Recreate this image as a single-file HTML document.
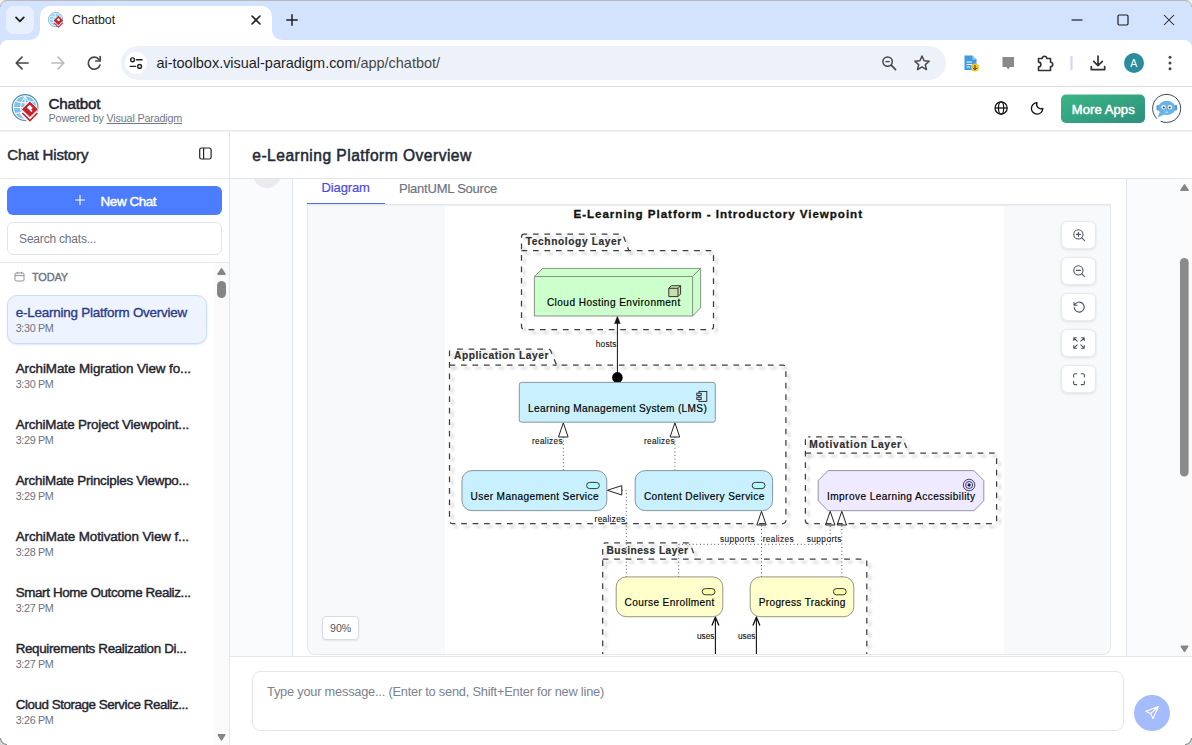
<!DOCTYPE html>
<html>
<head>
<meta charset="utf-8">
<title>Chatbot</title>
<style>
*{box-sizing:border-box;margin:0;padding:0}
html,body{width:1192px;height:745px;overflow:hidden;background:#fff}
body{font-family:"Liberation Sans",sans-serif;position:relative;color:#1f2937}
.abs{position:absolute}
.t{position:absolute;white-space:nowrap;line-height:1}
/* browser chrome */
#tabbar{left:0;top:0;width:1192px;height:50px;background:#d3e3fd;border-top:1px solid #b9b9b9}
#tab{left:40px;top:6px;width:232px;height:34px;background:#fff;border-radius:10px 10px 0 0}
#tabdd{left:6px;top:6px;width:27.6px;height:28px;background:#e9f0fd;border-radius:8px}
#toolbar{left:0;top:40px;width:1192px;height:46px;background:#fff;border-radius:8px 8px 0 0}
#urlpill{left:121px;top:46px;width:825px;height:34px;border-radius:17px;background:#edf2fa}
#tbline{left:0;top:86px;width:1192px;height:1px;background:#dadce0}
/* app */
#apphead{left:0;top:87px;width:1192px;height:43px;background:#fff}
#appline{left:0;top:130px;width:1192px;height:2px;background:linear-gradient(#e3e4e8,#f3f4f6)}
#sidebar{left:0;top:132px;width:229px;height:613px;background:#fff}
#sideline{left:229px;top:132px;width:1px;height:613px;background:#e5e7eb}
#main{left:230px;top:132px;width:962px;height:613px;background:#fafbfd}
</style>
</head>
<body>
<!-- ===== Browser chrome ===== -->
<div id="tabbar" class="abs"></div>
<div id="tabdd" class="abs"></div>
<div id="tab" class="abs"></div>
<div id="toolbar" class="abs"></div>
<div id="urlpill" class="abs"></div>
<div id="tbline" class="abs"></div>
<!-- ===== App ===== -->
<div id="apphead" class="abs"></div>
<div id="appline" class="abs"></div>
<div id="sidebar" class="abs"></div>
<div id="sideline" class="abs"></div>
<div id="main" class="abs"></div>
<!-- tab strip -->
<svg class="abs" style="left:0;top:0" width="1192" height="87" viewBox="0 0 1192 87" fill="none">
  <!-- tab curves at bottom corners -->
  <path d="M30 40 H40 V30 A10 10 0 0 1 30 40 Z" fill="#fff"/>
  <path d="M282 40 H272 V30 A10 10 0 0 0 282 40 Z" fill="#fff"/>
  <!-- dropdown chevron -->
  <path d="M16 17.4 L19.9 21.4 L23.8 17.4" stroke="#1f1f1f" stroke-width="1.8" fill="none" stroke-linecap="round" stroke-linejoin="round"/>
  <!-- favicon -->
  <circle cx="55.6" cy="19.6" r="7.1" fill="#fff" stroke="#6a9bb5" stroke-width=".8"/>
  <circle cx="55.6" cy="19.6" r="6" fill="#8fd0f3"/>
  <path d="M49.6 19.6 H61.6 M55.6 13.6 V25.6 M50.6 16.4 Q55.6 18 60.6 16.4 M50.6 22.8 Q55.6 21.2 60.6 22.8 M55.6 13.6 Q50.4 19.6 55.6 25.6" stroke="#fff" stroke-width=".6" fill="none"/>
  <path d="M54 23 L58.4 27.2 L62.8 23" stroke="#d6434b" stroke-width="1.1" fill="none"/>
  <path d="M58.4 15.8 L63 20.4 L58.4 25 L53.8 20.4 Z" fill="#cd1f2a"/>
  <path d="M58.3 18 L60.1 19.8 L58.9 21.6 L56.6 19.7 Z" fill="#fff"/>
  <!-- tab close -->
  <path d="M252 16 L260 24 M260 16 L252 24" stroke="#1f1f1f" stroke-width="1.6" stroke-linecap="round"/>
  <!-- new tab plus -->
  <path d="M286.8 20 H297.2 M292 14.8 V25.2" stroke="#1f1f1f" stroke-width="1.5" stroke-linecap="round"/>
  <!-- window controls -->
  <path d="M1071.5 20 H1082.5" stroke="#1f1f1f" stroke-width="1.2"/>
  <rect x="1118" y="15" width="10" height="10" rx="1.2" stroke="#1f1f1f" stroke-width="1.2"/>
  <path d="M1164 15 L1174 25 M1174 15 L1164 25" stroke="#1f1f1f" stroke-width="1.05"/>
  <!-- back -->
  <path d="M28 63 H16.5 M22 57.2 L16.2 63 L22 68.8" stroke="#474747" stroke-width="1.7" fill="none" stroke-linecap="round" stroke-linejoin="round"/>
  <!-- forward (disabled) -->
  <path d="M52 63 H63.5 M58 57.2 L63.8 63 L58 68.8" stroke="#bdbdbd" stroke-width="1.7" fill="none" stroke-linecap="round" stroke-linejoin="round"/>
  <!-- reload -->
  <path d="M99 59.5 A6 6 0 1 0 100 65" stroke="#474747" stroke-width="1.7" fill="none" stroke-linecap="round"/>
  <path d="M100.2 56.5 V61 H95.7" stroke="#474747" stroke-width="1.7" fill="none" stroke-linejoin="round" stroke-linecap="round"/>
  <!-- site info circle -->
  <circle cx="136" cy="63" r="11" fill="#fff"/>
  <circle cx="132.6" cy="59.8" r="1.9" stroke="#1f1f1f" stroke-width="1.4"/>
  <path d="M136.5 59.8 H142" stroke="#1f1f1f" stroke-width="1.4" stroke-linecap="round"/>
  <circle cx="139.6" cy="66.4" r="1.9" stroke="#1f1f1f" stroke-width="1.4"/>
  <path d="M130.2 66.4 H135.6" stroke="#1f1f1f" stroke-width="1.4" stroke-linecap="round"/>
  <!-- zoom-out magnifier -->
  <circle cx="887.6" cy="61.6" r="4.7" stroke="#474747" stroke-width="1.5"/>
  <path d="M891.2 65.2 L895.6 69.6" stroke="#474747" stroke-width="1.7" stroke-linecap="round"/>
  <path d="M885.4 61.6 H889.8" stroke="#474747" stroke-width="1.3"/>
  <!-- star -->
  <path d="M922 56 L924.1 60.7 L929.2 61.2 L925.3 64.6 L926.5 69.6 L922 66.9 L917.5 69.6 L918.7 64.6 L914.8 61.2 L919.9 60.7 Z" stroke="#474747" stroke-width="1.5" stroke-linejoin="round"/>
  <!-- ext 1: blue doc w/ yellow badge -->
  <path d="M964.5 55.5 H972.5 L976.5 59.5 V70 H964.5 Z" fill="#3f9ae0"/>
  <path d="M972.5 55.5 V59.5 H976.5 Z" fill="#9fd0f5"/>
  <path d="M966.5 62 H972 M966.5 64.5 H972 M966.5 67 H970" stroke="#fff" stroke-width="1"/>
  <circle cx="975" cy="67.5" r="4" fill="#f7c325"/>
  <path d="M975 65 V69.5 M973 67.8 L975 69.8 L977 67.8" stroke="#333" stroke-width="1" fill="none"/>
  <!-- ext 2: grey speech bubble -->
  <path d="M1002.5 57 H1014 V67 H1010 L1008.2 69.5 L1006.4 67 H1002.5 Z" fill="#8a8a8a"/>
  <!-- ext 3: puzzle -->
  <path d="M1038.5 58.5 H1042.3 A2.2 2.2 0 0 1 1046.7 58.5 H1050.5 V62.3 A2.2 2.2 0 0 1 1050.5 66.7 V70.5 H1038.5 V66.9 A2.3 2.3 0 0 0 1038.5 62.1 Z" stroke="#333" stroke-width="1.6" stroke-linejoin="round"/>
  <!-- separator -->
  <rect x="1070.5" y="56" width="2" height="14" rx="1" fill="#c7d7f5"/>
  <!-- download -->
  <path d="M1098 56 V65.2 M1093.7 61.3 L1098 65.6 L1102.3 61.3" stroke="#333" stroke-width="1.7" fill="none" stroke-linejoin="round" stroke-linecap="round"/>
  <path d="M1091.3 66.5 V69.6 H1104.7 V66.5" stroke="#333" stroke-width="1.7" fill="none" stroke-linejoin="round" stroke-linecap="round"/>
  <!-- avatar -->
  <circle cx="1134" cy="63" r="10" fill="#2b8c9e"/>
  <!-- menu dots -->
  <circle cx="1170" cy="57.2" r="1.5" fill="#474747"/><circle cx="1170" cy="63" r="1.5" fill="#474747"/><circle cx="1170" cy="68.8" r="1.5" fill="#474747"/>
</svg>
<div class="t" style="left:72px;top:14.4px;font-size:12.4px;color:#1f1f1f;letter-spacing:-.05px">Chatbot</div>
<div class="t" style="left:156.5px;top:55.5px;font-size:14.5px;color:#1f1f1f;letter-spacing:-.024px">ai-toolbox.visual-paradigm.com<span style="color:#474747">/app/chatbot/</span></div>
<div class="t" style="left:1130.3px;top:57.8px;font-size:10.5px;color:#fff">A</div>

<!--CHROME-ICONS-END-->
<svg class="abs" style="left:0;top:87px" width="1192" height="44" viewBox="0 87 1192 44" fill="none">
  <!-- logo -->
  <circle cx="25.1" cy="107.5" r="12.9" fill="#fff" stroke="#4f87a6" stroke-width="1.1"/>
  <circle cx="25.1" cy="107.5" r="11.2" fill="#7cc4ee"/>
  <path d="M13.9 107.5 H36.3 M25.1 96.3 V118.7 M15.6 101.6 Q25.1 104.6 34.6 101.6 M15.6 113.4 Q25.1 110.4 34.6 113.4 M25.1 96.3 Q15.5 107.5 25.1 118.7 M25.1 96.3 Q34.7 107.5 25.1 118.7" stroke="#fff" stroke-width="1" fill="none"/>
  <path d="M21.2 112.6 L29.9 121.3 L38.6 112.6" stroke="#fff" stroke-width="4.2" fill="none"/>
  <path d="M22.4 113 L29.9 120.5 L37.4 113" stroke="#c8222c" stroke-width="1.7" fill="none"/>
  <path d="M29.9 100.6 L38.8 109.3 L29.9 118 L21 109.3 Z" fill="#fff"/>
  <path d="M29.9 101.5 L37.9 109.3 L29.9 117.1 L21.9 109.3 Z" fill="#c8222c"/>
  <path d="M29.7 104.8 L32.8 107.9 L31.2 109.5 L32.6 110.9 L31.4 112.1 L26.9 107.6 Z" fill="#fff"/>
  <!-- globe icon -->
  <circle cx="1001.1" cy="108" r="6.1" stroke="#111" stroke-width="1.25"/>
  <ellipse cx="1001.1" cy="108" rx="2.6" ry="6.1" stroke="#111" stroke-width="1.15"/>
  <path d="M995 108 H1007.2" stroke="#111" stroke-width="1.3"/>
  <!-- moon -->
  <path d="M1037 102.7 A5.7 5.7 0 1 0 1042.8 108.3 A4.3 4.3 0 0 1 1037 102.7 Z" stroke="#111" stroke-width="1.3" stroke-linejoin="round"/>
  <!-- more apps -->
  <defs><linearGradient id="ga" x1="0" y1="0" x2="1" y2="1"><stop offset="0" stop-color="#3bb685"/><stop offset="1" stop-color="#2c907d"/></linearGradient></defs>
  <rect x="1061" y="94.5" width="84" height="28.5" rx="5" fill="url(#ga)"/>
  <!-- bot avatar -->
  <path d="M1156.6 118.4 A14.1 14.1 0 1 1 1161 121.4" stroke="#3b4663" stroke-width="1" fill="none" stroke-linecap="round"/>
  <path d="M1159.6 112.2 L1157.6 117.6 L1164.6 114.6 Z" fill="#6bb3e7"/>
  <rect x="1156.6" y="105" width="2.6" height="5.4" rx="1.2" fill="#4f94d4"/><rect x="1174.4" y="105" width="2.6" height="5.4" rx="1.2" fill="#4f94d4"/>
  <ellipse cx="1166.8" cy="107.9" rx="8.7" ry="7.1" fill="#6bb3e7"/>
  <circle cx="1163.6" cy="107.3" r="2.2" fill="#eef6fc"/><circle cx="1169.9" cy="107.3" r="2.2" fill="#eef6fc"/>
  <circle cx="1163.8" cy="107.4" r="1" fill="#39445e"/><circle cx="1169.7" cy="107.4" r="1" fill="#39445e"/>
  <rect x="1165.5" y="111.6" width="2.6" height="1.1" rx=".5" fill="#cfe7f8"/>
</svg>
<div class="t" style="left:48.6px;top:95.6px;font-size:15.2px;color:#1e2235;-webkit-text-stroke:.5px #1e2235;letter-spacing:-.23px">Chatbot</div>
<div class="t" style="left:48.6px;top:112.6px;font-size:10.8px;color:#737987;letter-spacing:-.19px">Powered by <span style="text-decoration:underline">Visual Paradigm</span></div>
<div class="t" style="left:1071.8px;top:103px;font-size:13px;color:#fff;-webkit-text-stroke:.5px #fff;letter-spacing:.09px">More Apps</div>

<!--APP-HEADER-END-->
<div class="abs" style="left:0;top:178px;width:229px;height:1px;background:#e5e7eb"></div>
<div class="t" style="left:7.3px;top:146.8px;font-size:15px;font-weight:normal;-webkit-text-stroke:.45px #1f2937;color:#1f2937;letter-spacing:-.128px">Chat History</div>
<svg class="abs" style="left:198.4px;top:146.4px" width="15" height="15" viewBox="0 0 15 15" fill="none"><rect x="1.7" y="2" width="11.4" height="11" rx="1.8" stroke="#222" stroke-width="1.2"/><path d="M5.6 2 V13" stroke="#222" stroke-width="1.2"/></svg>
<div class="abs" style="left:7px;top:186px;width:215px;height:29px;border-radius:6px;background:#4c7cff"></div>
<svg class="abs" style="left:74px;top:194px" width="12" height="12" viewBox="0 0 12 12"><path d="M6 1 V11 M1 6 H11" stroke="#fff" stroke-width="1.1"/></svg>
<div class="t" style="left:100.6px;top:195.2px;font-size:13.4px;font-weight:normal;-webkit-text-stroke:.45px #fff;color:#fff;letter-spacing:-.41px">New Chat</div>
<div class="abs" style="left:7px;top:222px;width:215px;height:33px;border-radius:6px;border:1px solid #e2e4e9;background:#fff"></div>
<div class="t" style="left:19.1px;top:233.2px;font-size:12px;color:#6b7280;letter-spacing:-.2px">Search chats...</div>
<div class="abs" style="left:0;top:262px;width:229px;height:1px;background:#e5e7eb"></div>
<!-- list scrollbar -->
<div class="abs" style="left:214px;top:263px;width:15px;height:482px;background:#fafafa"></div>
<svg class="abs" style="left:214px;top:263px" width="15" height="482" viewBox="0 0 15 482"><path d="M4 11.2 L7.5 5.9 L11 11.2 Z" fill="#858585" stroke="#858585" stroke-width="1.6" stroke-linejoin="round"/><path d="M4.4 471.8 L7.5 476.8 L10.6 471.8 Z" fill="#858585" stroke="#858585" stroke-width="1.6" stroke-linejoin="round"/><rect x="3" y="18" width="9" height="17" rx="4.5" fill="#858585"/></svg>
<!-- today -->
<svg class="abs" style="left:14px;top:271px" width="11" height="11" viewBox="0 0 11 11" fill="none"><rect x="1" y="2" width="9" height="8" rx="1.2" stroke="#8b909a" stroke-width="1"/><path d="M1 4.6 H10 M3.4 .8 V3 M7.6 .8 V3" stroke="#8b909a" stroke-width="1"/></svg>
<div class="t" style="left:32px;top:271.8px;font-size:11px;font-weight:normal;-webkit-text-stroke:.35px #6b7280;color:#6b7280;letter-spacing:-.178px">TODAY</div>
<div class="abs" style="left:7px;top:295.2px;width:200px;height:48.8px;border-radius:10px;background:#eef4ff;border:1px solid #c9dcfb;box-shadow:0 1px 2px rgba(120,150,220,.25)"></div>
<style>.ct{position:absolute;left:15.7px;font-size:13.4px;font-weight:normal;color:#1f2430;white-space:nowrap;line-height:1;-webkit-text-stroke:.42px #1f2430}.cm{position:absolute;left:15.7px;font-size:10.8px;color:#6b7280;white-space:nowrap;line-height:1;letter-spacing:-.34px}</style>
<div class="ct" style="top:305.5px;color:#2c3a8a;letter-spacing:-.205px;-webkit-text-stroke:.35px #2c3a8a">e-Learning Platform Overview</div><div class="cm" style="top:323.2px">3:30 PM</div>
<div class="ct" style="top:361.5px;letter-spacing:-0.077px">ArchiMate Migration View fo...</div><div class="cm" style="top:379.2px">3:30 PM</div>
<div class="ct" style="top:417.5px;letter-spacing:-0.169px">ArchiMate Project Viewpoint...</div><div class="cm" style="top:435.2px">3:29 PM</div>
<div class="ct" style="top:473.5px;letter-spacing:-0.244px">ArchiMate Principles Viewpo...</div><div class="cm" style="top:491.2px">3:29 PM</div>
<div class="ct" style="top:529.5px;letter-spacing:-0.095px">ArchiMate Motivation View f...</div><div class="cm" style="top:547.2px">3:28 PM</div>
<div class="ct" style="top:585.5px;letter-spacing:-0.371px">Smart Home Outcome Realiz...</div><div class="cm" style="top:603.2px">3:27 PM</div>
<div class="ct" style="top:641.5px;letter-spacing:-0.342px">Requirements Realization Di...</div><div class="cm" style="top:659.2px">3:27 PM</div>
<div class="ct" style="top:697.5px;letter-spacing:-0.441px">Cloud Storage Service Realiz...</div><div class="cm" style="top:715.2px">3:26 PM</div>

<!--SIDEBAR-END-->
<!-- main header -->
<div class="abs" style="left:230px;top:132px;width:962px;height:46px;background:#fff"></div>
<div class="abs" style="left:230px;top:178px;width:962px;height:1px;background:#e3e5ea"></div>
<div class="t" id="mtitle" style="left:252.3px;top:147.6px;font-size:15.6px;color:#1f2937;-webkit-text-stroke:.5px #1f2937;letter-spacing:.47px">e-Learning Platform Overview</div>
<!-- avatar stub -->
<div class="abs" style="left:230px;top:179px;width:63px;height:12px;overflow:hidden"><div class="abs" style="left:22.5px;top:-19px;width:28px;height:28px;border-radius:50%;background:#ebebef"></div></div>
<!-- bubble -->
<div class="abs" style="left:292px;top:179px;width:835px;height:478px;background:#fff;border-left:1px solid #e2e4e9;border-right:1px solid #e2e4e9"></div>
<!-- tabs -->
<div class="abs" style="left:307px;top:203.5px;width:804px;height:1.5px;background:#e5e7eb"></div>
<div class="abs" style="left:307px;top:202.6px;width:78px;height:1.8px;background:#4a6cf7"></div>
<div class="t" id="tab1" style="left:321.5px;top:181.2px;font-size:13px;color:#4b4be6;-webkit-text-stroke:.2px #4b4be6;letter-spacing:-.12px">Diagram</div>
<div class="t" id="tab2" style="left:399px;top:182px;font-size:13px;color:#6b7280;-webkit-text-stroke:.15px #6b7280;letter-spacing:-.23px">PlantUML Source</div>
<!-- diagram container -->
<div class="abs" style="left:307px;top:205px;width:804px;height:450px;background:#f8f9fb;border:1px solid #e5e7eb;border-top-color:#eceef2;border-radius:0 0 8px 8px;overflow:hidden">
  <div class="abs" style="left:137px;top:0;width:559px;height:450px;background:#fff"></div>
</div>
<!-- zoom controls -->
<style>.zb{position:absolute;left:1061px;width:35px;height:28px;border-radius:6px;background:#fff;border:1px solid #e8eaee;box-shadow:0 1px 3px rgba(0,0,0,.1)}</style>
<div class="zb" style="top:220.9px"></div><div class="zb" style="top:256.9px"></div><div class="zb" style="top:292.9px"></div><div class="zb" style="top:328.9px"></div><div class="zb" style="top:364.9px"></div>
<svg class="abs" style="left:1061.5px;top:221.4px" width="34" height="174" viewBox="0 0 34 174" fill="none" stroke="#4b5563" stroke-width="1.1" stroke-linecap="round" stroke-linejoin="round">
  <circle cx="16.4" cy="13.4" r="4.6"/><path d="M19.8 16.8 L22.6 19.6 M14.4 13.4 H18.4 M16.4 11.4 V15.4"/>
  <circle cx="16.4" cy="49.4" r="4.6"/><path d="M19.8 52.8 L22.6 55.6 M14.4 49.4 H18.4"/>
  <path d="M12.2 86.3 A5 5 0 1 0 13.6 82.6 L12 84.2 M12 81.2 V84.3 H15.1"/>
  <path d="M18.8 120.2 L22.2 116.8 M19.6 116.8 H22.2 V119.4 M15.2 120.2 L11.8 116.8 M14.4 116.8 H11.8 V119.4 M18.8 123.8 L22.2 127.2 M19.6 127.2 H22.2 V124.6 M15.2 123.8 L11.8 127.2 M14.4 127.2 H11.8 V124.6"/>
  <path d="M11.6 156 V154.2 A1.4 1.4 0 0 1 13 152.8 H14.8 M19.2 152.8 H21 A1.4 1.4 0 0 1 22.4 154.2 V156 M22.4 160.4 V162.2 A1.4 1.4 0 0 1 21 163.6 H19.2 M14.8 163.6 H13 A1.4 1.4 0 0 1 11.6 162.2 V160.4"/>
</svg>
<!-- 90% badge -->
<div class="abs" style="left:322px;top:616px;width:37px;height:24px;border-radius:4px;background:#fff;border:1px solid #d9dce2;box-shadow:0 1px 2px rgba(0,0,0,.09)"></div>
<div class="t" style="left:330px;top:622.8px;font-size:10.6px;color:#4b5563;letter-spacing:0">90%</div>
<!-- main scrollbar -->
<div class="abs" style="left:1177px;top:179px;width:15px;height:478px;background:#fafafa"></div>
<svg class="abs" style="left:1177px;top:179px" width="15" height="478" viewBox="0 0 15 478"><path d="M4 11.2 L7.5 5.9 L11 11.2 Z" fill="#858585" stroke="#858585" stroke-width="1.6" stroke-linejoin="round"/><path d="M4.4 467.3 L7.5 472.3 L10.6 467.3 Z" fill="#858585" stroke="#858585" stroke-width="1.6" stroke-linejoin="round"/><rect x="3" y="79" width="8.6" height="218.5" rx="4.3" fill="#8a8a8a"/></svg>
<!-- input area -->
<div class="abs" style="left:230px;top:656px;width:962px;height:89px;background:#fff;border-top:1px solid #e3e5ea"></div>
<div class="abs" style="left:252px;top:671px;width:872px;height:60px;border:1px solid #e3e5ea;border-radius:9px;background:#fff"></div>
<div class="t" id="ph" style="left:267px;top:686px;font-size:12.8px;color:#7b8291;letter-spacing:-.215px">Type your message... (Enter to send, Shift+Enter for new line)</div>
<div class="abs" style="left:1134px;top:694.7px;width:36px;height:36px;border-radius:50%;background:#a4bcfc"></div>
<svg class="abs" style="left:1143.3px;top:703.8px" width="18" height="18" viewBox="0 0 18 18" fill="none" stroke="#fff" stroke-width="1.1" stroke-linejoin="round" stroke-linecap="round"><path d="M15.5 2.5 L2.8 7.2 L7.6 9.6 L10 14.6 Z M15.5 2.5 L7.6 9.6"/></svg>
<!-- window top corners -->
<svg class="abs" style="left:0;top:0" width="8" height="8" viewBox="0 0 8 8"><path d="M0 0 H7 A7 7 0 0 0 0 7 Z" fill="#efeeec"/><path d="M7 .5 A6.5 6.5 0 0 0 .5 7" stroke="#b9b9b9" fill="none"/></svg>
<svg class="abs" style="left:1184px;top:0" width="8" height="8" viewBox="0 0 8 8"><path d="M8 0 H1 A7 7 0 0 1 8 7 Z" fill="#efeeec"/><path d="M1 .5 A6.5 6.5 0 0 1 7.5 7" stroke="#b9b9b9" fill="none"/></svg>
<!-- window rounded bottom corners -->
<svg class="abs" style="left:0;top:737px" width="8" height="8" viewBox="0 0 8 8"><path d="M0 8 H7 A7 7 0 0 1 0 1 Z" fill="#d9d9d9"/><path d="M.5 1 A6.5 6.5 0 0 0 7 7.5" stroke="#8f8f8f" stroke-width="1.2" fill="none"/></svg>
<svg class="abs" style="left:1184px;top:737px" width="8" height="8" viewBox="0 0 8 8"><path d="M8 8 H1 A7 7 0 0 0 8 1 Z" fill="#d9d9d9"/><path d="M7.5 1 A6.5 6.5 0 0 1 1 7.5" stroke="#8f8f8f" stroke-width="1.2" fill="none"/></svg>
<!--MAIN-END-->
<svg class="abs" style="left:445px;top:206px" width="559" height="448" viewBox="445 206 559 448" font-family="'Liberation Sans',sans-serif">
  <defs>
    <filter id="sh" x="-5%" y="-5%" width="115%" height="115%"><feGaussianBlur in="SourceAlpha" stdDeviation="1.5"/><feOffset dx="3.3" dy="3.3" result="b"/><feComponentTransfer><feFuncA type="linear" slope=".3"/></feComponentTransfer><feMerge><feMergeNode/><feMergeNode in="SourceGraphic"/></feMerge></filter>
  </defs>
  <!-- title -->
  <text x="573.5" y="217.6" font-size="11.6" font-weight="bold" fill="#111" stroke="#111" stroke-width=".3" textLength="288.5" lengthAdjust="spacing">E-Learning Platform - Introductory Viewpoint</text>

  <!-- ===== frames ===== -->
  <g fill="none" stroke="#3d3d3d" stroke-width="1.25" stroke-dasharray="5.73 5.73" filter="url(#sh)">
    <!-- frames: tab+body outline, then under-tab line -->
    <path d="M524.3 234 H620.6 Q622.6 234 623.4 236 L628.8 250.5 H710.7 A2.8 2.8 0 0 1 713.5 253.3 V326.7 A2.8 2.8 0 0 1 710.7 329.5 H524.3 A2.8 2.8 0 0 1 521.5 326.7 V236.8 A2.8 2.8 0 0 1 524.3 234" stroke-dashoffset="2.85"/>
    <path d="M521.5 250.5 H628.8"/>
    <path d="M452.3 349 H548 Q550 349 550.8 351 L556.6 365.2 H783.1 A2.8 2.8 0 0 1 785.9 368.0 V520.7 A2.8 2.8 0 0 1 783.1 523.5 H452.3 A2.8 2.8 0 0 1 449.5 520.7 V351.8 A2.8 2.8 0 0 1 452.3 349" stroke-dashoffset="6.65"/>
    <path d="M449.5 365.2 H556.6"/>
    <path d="M808.2 436.8 H900.2 Q902.2 436.8 903.0 438.8 L908.4 453 H993.8 A2.8 2.8 0 0 1 996.6 455.8 V520.7 A2.8 2.8 0 0 1 993.8 523.5 H808.2 A2.8 2.8 0 0 1 805.4 520.7 V439.6 A2.8 2.8 0 0 1 808.2 436.8" stroke-dashoffset="3.54"/>
    <path d="M805.4 453 H908.4"/>
    <path d="M605.5 542.8 H687.8 Q689.8 542.8 690.6 544.8 L695.6 559 H864.0 A2.8 2.8 0 0 1 866.8 561.8 V676.2 A2.8 2.8 0 0 1 864.0 679 H605.5 A2.8 2.8 0 0 1 602.7 676.2 V545.6 A2.8 2.8 0 0 1 605.5 542.8" stroke-dashoffset="2.77"/>
    <path d="M602.7 559 H695.6"/>
  </g>
  <g font-size="10.2" font-weight="bold" fill="#2e2e2e" stroke="#2e2e2e" stroke-width=".2">
    <text x="525.7" y="245" textLength="95.6" lengthAdjust="spacing">Technology Layer</text>
    <text x="454" y="359.2" textLength="94.4" lengthAdjust="spacing">Application Layer</text>
    <text x="809.2" y="448.3" textLength="91.8" lengthAdjust="spacing">Motivation Layer</text>
    <text x="606.5" y="553.8" textLength="81.5" lengthAdjust="spacing">Business Layer</text>
  </g>

  <!-- ===== connectors ===== -->
  <g stroke="#111" fill="none">
    <!-- hosts -->
    <path d="M617.4 377 V323" stroke-width="1"/>
    <path d="M617.4 316.2 L620.2 323.6 H614.6 Z" fill="#111" stroke-width=".5"/>
    <circle cx="617.4" cy="377.4" r="5.3" fill="#000" stroke="none"/>
    <!-- uses arrows -->
    <path d="M715.4 654 V618" stroke-width="1.1"/>
    <path d="M711.9 625.6 L715.4 617.2 L718.9 625.6" stroke-width="1.3"/>
    <path d="M756.4 654 V618" stroke-width="1.1"/>
    <path d="M752.9 625.6 L756.4 617.2 L759.9 625.6" stroke-width="1.3"/>
  </g>
  <!-- dotted lines -->
  <g stroke="#444" stroke-width="1" stroke-dasharray="0.9 2.7" fill="none">
    <path d="M563.3 437 V470.5"/>
    <path d="M674.9 437 V470.5"/>
    <path d="M622 490.3 H626.3 V577"/>
    <path d="M761.5 525.5 V577"/>
    <path d="M678.7 577 V544.3 H830.2 V525.5"/>
    <path d="M841.8 525.5 V577"/>
  </g>
  <!-- hollow triangles -->
  <g stroke="#222" stroke-width="1" fill="none" stroke-linejoin="miter">
    <path d="M563.3 422.8 L558.5 437 H568.1 Z"/>
    <path d="M674.9 422.8 L670.1 437 H679.7 Z"/>
    <path d="M607.3 490.3 L621.8 485.6 V495 Z"/>
    <path d="M761.5 511.3 L756.8 525 H766.2 Z"/>
    <path d="M830.2 511.3 L825.5 525 H834.9 Z"/>
    <path d="M841.8 511.3 L837.1 525 H846.5 Z"/>
  </g>
  <!-- edge labels -->
  <g font-size="8.3" fill="#111" stroke="#111" stroke-width=".1">
    <text x="595.7" y="346.7" textLength="20.8" lengthAdjust="spacing">hosts</text>
    <text x="532" y="444" textLength="30.6" lengthAdjust="spacing">realizes</text>
    <text x="644" y="444" textLength="30.6" lengthAdjust="spacing">realizes</text>
    <text x="594.6" y="522" textLength="30.6" lengthAdjust="spacing">realizes</text>
    <text x="719.9" y="541.8" textLength="34.8" lengthAdjust="spacing">supports</text>
    <text x="762.7" y="541.8" textLength="30.9" lengthAdjust="spacing">realizes</text>
    <text x="806.7" y="541.8" textLength="34.8" lengthAdjust="spacing">supports</text>
    <text x="697" y="639" textLength="17.5" lengthAdjust="spacing">uses</text>
    <text x="738" y="639" textLength="17.5" lengthAdjust="spacing">uses</text>
  </g>

  <!-- ===== elements ===== -->
  <!-- Cloud hosting node -->
  <g stroke="#7c877c" stroke-width=".9" stroke-linejoin="round">
    <path d="M534.4 276.5 L542.7 268.4 H700.6 V307.8 L692.6 316 H534.4 Z" fill="#ccffcc"/>
    <path d="M534.4 276.5 H692.6 V316 M692.6 276.5 L700.6 268.4" fill="none"/>
  </g>
  <g stroke="#222" stroke-width=".9" stroke-linejoin="round">
    <path d="M668.8 288.3 L671.4 285.7 H680.6 V294 L678 296.6 H668.8 Z" fill="#c6deb0"/>
    <path d="M668.8 288.3 H678 V296.6 M678 288.3 L680.6 285.7" fill="none"/>
  </g>
  <!-- LMS -->
  <rect x="519.3" y="382.4" width="196" height="39.8" rx="2.3" fill="#c8f0ff" stroke="#7d8a92" stroke-width=".9"/>
  <g stroke="#222" stroke-width=".9" fill="#c8f0ff">
    <rect x="699" y="391.4" width="7.8" height="10"/>
    <rect x="696.8" y="393.2" width="4.4" height="2.2"/>
    <rect x="696.8" y="397.2" width="4.4" height="2.2"/>
  </g>
  <!-- services -->
  <rect x="462" y="470.6" width="144.8" height="40" rx="10" fill="#c8f0ff" stroke="#7d8a92" stroke-width=".9"/>
  <rect x="586.6" y="482.4" width="12.8" height="6.2" rx="3.1" fill="#b6fbff" stroke="#222" stroke-width=".9"/>
  <rect x="635.2" y="470.6" width="137.4" height="40" rx="10" fill="#c8f0ff" stroke="#7d8a92" stroke-width=".9"/>
  <rect x="752.2" y="482.4" width="12.8" height="6.2" rx="3.1" fill="#b6fbff" stroke="#222" stroke-width=".9"/>
  <!-- goal -->
  <path d="M828.1 470.6 H973.9 L983.8 480.5 V500.8 L973.9 510.7 H828.1 L818.2 500.8 V480.5 Z" fill="#efeaff" stroke="#8a8799" stroke-width=".9"/>
  <g stroke="#1f1f4d" stroke-width=".8" fill="none"><circle cx="969.1" cy="485" r="5.8" fill="#e3dcfb"/><circle cx="969.1" cy="485" r="3.5"/><circle cx="969.1" cy="485" r="1.2" fill="#1f1f4d"/></g>
  <!-- business -->
  <rect x="616.2" y="576.9" width="106.6" height="39.8" rx="10" fill="#ffffcc" stroke="#8a8a78" stroke-width=".9"/>
  <rect x="702.2" y="588.6" width="12.8" height="6.2" rx="3.1" fill="#fdfdaa" stroke="#222" stroke-width=".9"/>
  <rect x="750.2" y="576.9" width="103.6" height="39.8" rx="10" fill="#ffffcc" stroke="#8a8a78" stroke-width=".9"/>
  <rect x="833.4" y="588.6" width="12.8" height="6.2" rx="3.1" fill="#fdfdaa" stroke="#222" stroke-width=".9"/>
  <!-- element labels -->
  <g font-size="10.1" fill="#000" stroke="#000" stroke-width=".18">
    <text x="546.9" y="305.9" textLength="133.3" lengthAdjust="spacing">Cloud Hosting Environment</text>
    <text x="528" y="412.4" textLength="178.8" lengthAdjust="spacing">Learning Management System (LMS)</text>
    <text x="470.6" y="500" textLength="127.9" lengthAdjust="spacing">User Management Service</text>
    <text x="643.9" y="500" textLength="120.4" lengthAdjust="spacing">Content Delivery Service</text>
    <text x="827" y="500" textLength="148.1" lengthAdjust="spacing">Improve Learning Accessibility</text>
    <text x="624.5" y="605.9" textLength="89.9" lengthAdjust="spacing">Course Enrollment</text>
    <text x="758.7" y="605.9" textLength="86.6" lengthAdjust="spacing">Progress Tracking</text>
  </g>
</svg>

<!--DIAGRAM-END-->
</body>
</html>
